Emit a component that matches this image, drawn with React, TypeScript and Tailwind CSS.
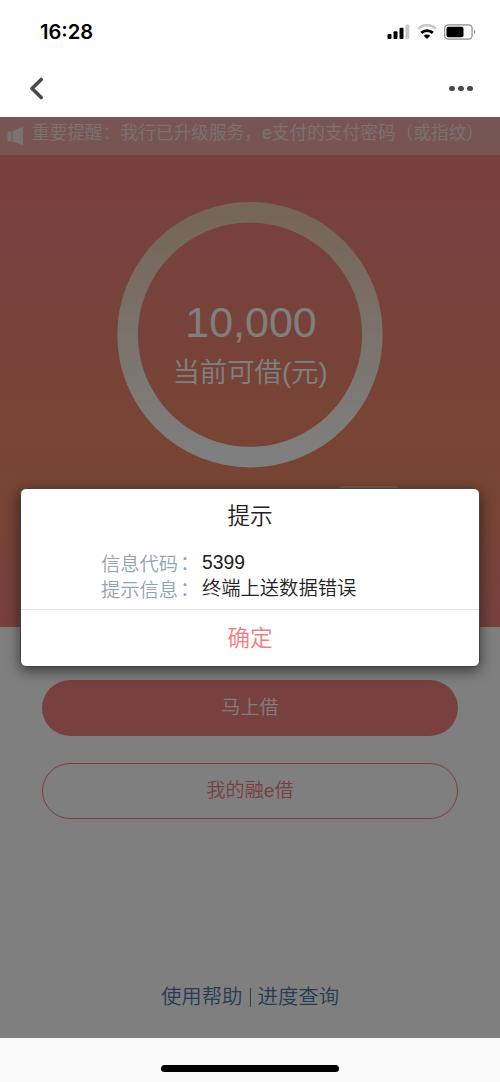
import React from 'react';

const StatusBar: React.FC = () => (
  <div className="flex h-[63px] items-center justify-between bg-white pl-10 pr-6">
    <span className="font-['Inter',sans-serif] mt-px text-[20.1px] font-semibold leading-[22px] text-black">
      16:28
    </span>
    <div className="flex items-center gap-[7px]">
      <svg width="23" height="16" viewBox="0 0 23 16">
        <rect x="0.5" y="10" width="4" height="5" rx="1" fill="#000" />
        <rect x="6.5" y="7.3" width="4" height="7.7" rx="1" fill="#000" />
        <rect x="12.5" y="3.8" width="4" height="11.2" rx="1" fill="#000" />
        <rect x="18.5" y="0.5" width="3.8" height="14.5" rx="1" fill="#c9c9c9" />
      </svg>
      <svg width="20" height="16" viewBox="0 0 20 16" fill="none">
        <path d="M1.2 4.7a12.6 12.6 0 0 1 17.6 0" stroke="#c9c9c9" strokeWidth="2.8" />
        <path d="M4.2 8.9a8.6 8.6 0 0 1 11.6 0" stroke="#000" strokeWidth="2.9" />
        <path d="M10 15l-3.2-3.2a4.6 4.6 0 0 1 6.4 0z" fill="#000" />
      </svg>
      <svg width="32" height="16" viewBox="0 0 32 16">
        <rect x="0.7" y="0.8" width="27.4" height="14.4" rx="3.6" fill="none" stroke="#8c8c8c" strokeWidth="1.2" />
        <rect x="2.5" y="2.7" width="17" height="10.6" rx="2" fill="#000" />
        <path d="M30 5.6c1.6.7 1.6 4.1 0 4.8z" fill="#8c8c8c" />
      </svg>
    </div>
  </div>
);

const NavBar: React.FC = () => (
  <div className="flex h-[54px] items-center justify-between bg-white pb-[3px] pl-[28px] pr-[27.5px]">
    <button type="button" aria-label="返回">
      <svg width="16" height="24" viewBox="0 0 16 24" fill="none">
        <path d="M13.2 2.5L4 11.5l9.2 9" stroke="#4a4a4a" strokeWidth="3.6" strokeLinecap="round" strokeLinejoin="round" />
      </svg>
    </button>
    <button type="button" aria-label="更多" className="flex gap-[3.5px]">
      <span className="h-[5.5px] w-[5.5px] rounded-full bg-[#4a4a4a]" />
      <span className="h-[5.5px] w-[5.5px] rounded-full bg-[#4a4a4a]" />
      <span className="h-[5.5px] w-[5.5px] rounded-full bg-[#4a4a4a]" />
    </button>
  </div>
);

const Notice: React.FC = () => (
  <div className="flex h-[38px] items-start overflow-hidden bg-[#eeaaa6] pl-[7px]">
    <svg width="17" height="20" viewBox="0 0 17 20" className="mt-[9px] shrink-0" fill="#fff" opacity="0.7">
      <path d="M0.5 5.5h4v10h-4zM5.5 5.5L16 0.8v18.4L5.5 15.5z" />
    </svg>
    <p className="ml-2 mt-1 whitespace-nowrap text-[17.7px] leading-6 text-white/65">
      重要提醒：我行已升级服务，e支付的支付密码（或指纹）
    </p>
  </div>
);

const AmountRing: React.FC = () => (
  <div className="relative mt-[47px] h-[266px] w-[266px]">
    <svg width="266" height="266" viewBox="0 0 266 266" fill="none">
      <defs>
        <linearGradient id="ring" x1="0" y1="0" x2="0" y2="1">
          <stop offset="0" stopColor="#ecccae" />
          <stop offset="1" stopColor="#ffffff" />
        </linearGradient>
      </defs>
      <circle cx="133" cy="132.7" r="122.4" stroke="url(#ring)" strokeWidth="20.6" />
    </svg>
    <div className="absolute inset-0 flex flex-col items-center pt-[95px] text-white">
      <span className="ml-[2px] text-[43px] leading-[50px]">10,000</span>
      <span className="mt-[2px] text-[27.4px] leading-[48px]">当前可借(元)</span>
    </div>
  </div>
);

interface FieldProps {
  label: string;
  value: string;
}

const Field: React.FC<FieldProps> = ({ label, value }) => (
  <>
    <dt className="text-[#8fa5b3]">
      {label}
      <span className="-ml-[3px] font-['Noto_Sans_CJK_TC',sans-serif]">：</span>
    </dt>
    <dd>{value}</dd>
  </>
);

// Error prompt returned by the bank's gateway
const AlertDialog: React.FC = () => (
  <div
    role="dialog"
    className="absolute left-5 right-5 top-[371px] flex h-[179px] flex-col rounded-[6px] border border-[#444] bg-white shadow-[0_4px_14px_rgba(0,0,0,0.55)]"
  >
    <h2 className="mt-[10px] text-center text-[22.6px] leading-9 text-[#222]">提示</h2>
    <dl className="ml-20 mt-[15px] grid auto-rows-[26px] grid-cols-[101px_1fr] text-[19.3px] leading-[26px] text-[#222]">
      <Field label="信息代码" value="5399" />
      <Field label="提示信息" value="终端上送数据错误" />
    </dl>
    <button
      type="button"
      className="mt-auto h-[57px] border-t border-[#e4e4e4] pt-px text-[22.6px] text-[#ee7f7e]"
    >
      确定
    </button>
  </div>
);

const App: React.FC = () => {
  return (
    <div className="flex h-[1082px] w-[500px] flex-col overflow-hidden bg-white font-['Liberation_Sans','Noto_Sans_CJK_SC',sans-serif] font-[350]">
      <StatusBar />
      <NavBar />
      <main className="relative flex h-[921px] flex-col bg-white">
        <Notice />
        <section className="flex h-[472px] flex-col items-center bg-linear-to-b from-[#ee8080] via-[#ee8a66] via-70% to-[#ee807e]">
          <AmountRing />
          <div className="ml-[238px] mt-[18px] h-7 w-[66px] rounded-lg bg-white/40" />
        </section>
        <div className="mt-[53px] flex flex-col gap-[27px] px-[42px] text-[19.1px]">
          <button type="button" className="h-14 rounded-full bg-[#f08380] text-white">
            马上借
          </button>
          <button type="button" className="h-14 rounded-full border-[1.5px] border-[#ee7f7e] pt-px text-[#ee7f7e]">
            我的融e借
          </button>
        </div>
        <div className="mb-[26px] mt-auto flex items-center justify-center gap-[7px] text-[20.4px] leading-[30px] text-[#4a7ba8]">
          <a>使用帮助</a>
          <span className="h-[19px] w-px bg-[#777]" />
          <a>进度查询</a>
        </div>
        <div className="absolute inset-0 bg-black/50" />
        <AlertDialog />
      </main>
      <footer className="flex flex-1 items-end justify-center bg-[#f9f9f9] pb-[10px]">
        <span className="h-[7px] w-[178px] rounded-full bg-black" />
      </footer>
    </div>
  );
};

export default App;
